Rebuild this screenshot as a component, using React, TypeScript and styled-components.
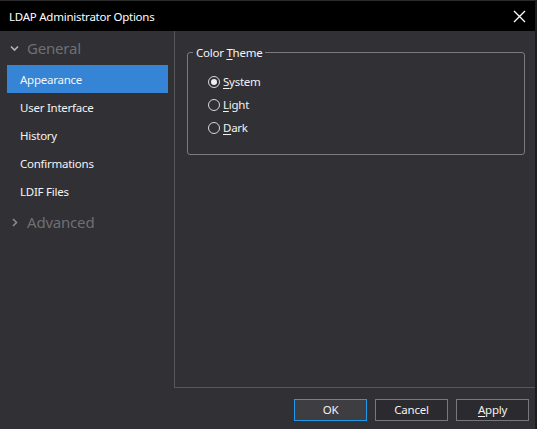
import styled, { createGlobalStyle } from "styled-components"

const GlobalStyle = createGlobalStyle`
	html, body {
		margin: 0;
		padding: 0;
		background: #313035;
	}
	* {
		box-sizing: border-box;
	}
`

const Window = styled.div`
	width: 537px;
	height: 429px;
	display: flex;
	flex-direction: column;
	background: #313035;
	border-right: 2px solid #1d1c20;
	font-family: "Noto Sans", "Segoe UI", sans-serif;
	font-size: 11.5px;
	letter-spacing: -0.25px;
	color: #f2f2f2;
	overflow: hidden;
`

const TitleBar = styled.div`
	height: 31px;
	flex: none;
	background: #000;
	display: flex;
	align-items: center;
	justify-content: space-between;
	padding: 0 9px 0 9px;
	border-top: 1px solid #2a2a2a;
`

const Title = styled.span`
	color: #fff;
`

const CloseButton = styled.button`
	background: none;
	border: none;
	padding: 0;
	width: 14px;
	height: 14px;
	display: flex;
	align-items: center;
	justify-content: center;
	cursor: pointer;
`

const Main = styled.div`
	flex: 1;
	display: flex;
	min-height: 0;
`

const Sidebar = styled.nav`
	width: 174px;
	flex: none;
	padding-top: 3px;
	display: flex;
	flex-direction: column;
`

const GroupHeader = styled.div`
	height: 28px;
	margin: 0 0 3px 0;
	display: flex;
	align-items: center;
	padding-left: 10px;
	gap: 8px;
	font-size: 15px;
	letter-spacing: -0.2px;
	color: #6f6f72;
`

const NavItem = styled.div<{ $active?: boolean }>`
	height: 28px;
	margin: 0 6px 0 7px;
	padding-left: 13px;
	display: flex;
	align-items: center;
	background: ${p => p.$active ? "#3584d5" : "transparent"};
	color: #f4f4f4;
`

const AdvancedHeader = styled(GroupHeader)`
	margin-top: 3px;
`

const Content = styled.section`
	flex: 1;
	border-left: 1px solid #58575c;
	border-bottom: 1px solid #58575c;
	padding: 14px 10px 0 12px;
`

const GroupBox = styled.fieldset`
	margin: 0;
	width: 338px;
	padding: 10px 0 15px 5px;
	border: 1px solid #7b7a7f;
	border-radius: 3px;
`

const Legend = styled.legend`
	margin-left: 0;
	padding: 0 3px;
	color: #f4f4f4;
`

const RadioList = styled.div`
	display: flex;
	flex-direction: column;
	padding-left: 15px;
`

const RadioRow = styled.label`
	height: 23px;
	display: flex;
	align-items: center;
	gap: 3px;
	cursor: pointer;
`

const RadioCircle = styled.span<{ $checked?: boolean }>`
	width: 12px;
	height: 12px;
	border-radius: 50%;
	border: 1px solid #d8d8d8;
	display: flex;
	align-items: center;
	justify-content: center;
	&::after {
		content: "";
		width: 6px;
		height: 6px;
		border-radius: 50%;
		background: ${p => p.$checked ? "#f0f0f0" : "transparent"};
	}
`

const Key = styled.span`
	text-decoration: underline;
	text-underline-offset: 2px;
`

const Footer = styled.div`
	height: 41px;
	flex: none;
	display: flex;
	justify-content: flex-end;
	align-items: center;
	gap: 8px;
	padding-right: 6px;
	padding-top: 2px;
`

const Button = styled.button<{ $primary?: boolean }>`
	width: 73px;
	height: 22px;
	border: 1px solid ${p => p.$primary ? "#1b9bea" : "#78777c"};
	background: ${p => p.$primary ? "#3e3d42" : "#2b2a2f"};
	color: #f2f2f2;
	font-family: inherit;
	font-size: inherit;
	letter-spacing: inherit;
	padding: 0;
	cursor: pointer;
`

function CloseIcon() {
	return (
		<svg width="13" height="13" viewBox="0 0 13 13">
			<path d="M1 1 L12 12 M12 1 L1 12" stroke="#fff" strokeWidth="1.3" fill="none" />
		</svg>
	)
}

function Chevron({ open }: { open?: boolean }) {
	return (
		<svg width="9" height="9" viewBox="0 0 9 9">
			{open
				? <path d="M1 2.5 L4.5 6 L8 2.5" stroke="#b4b4b8" strokeWidth="1.6" fill="none" />
				: <path d="M3 1 L6.5 4.5 L3 8" stroke="#8a8a8e" strokeWidth="1.6" fill="none" />
			}
		</svg>
	)
}

const themes = [
	{ key: "S", rest: "ystem", checked: true },
	{ key: "L", rest: "ight", checked: false },
	{ key: "D", rest: "ark", checked: false },
]

const navItems = ["Appearance", "User Interface", "History", "Confirmations", "LDIF Files"]

export default function App() {
	return (
		<>
			<GlobalStyle />
			<Window>
				<TitleBar>
					<Title>LDAP Administrator Options</Title>
					<CloseButton aria-label="Close">
						<CloseIcon />
					</CloseButton>
				</TitleBar>

				<Main>
					<Sidebar>
						<GroupHeader>
							<Chevron open />
							General
						</GroupHeader>
						{navItems.map((item, i) => (
							<NavItem key={item} $active={i === 0}>{item}</NavItem>
						))}
						<AdvancedHeader>
							<Chevron />
							Advanced
						</AdvancedHeader>
					</Sidebar>

					<Content>
						<GroupBox>
							<Legend>Color <Key>T</Key>heme</Legend>
							<RadioList>
								{themes.map(t => (
									<RadioRow key={t.key}>
										<RadioCircle $checked={t.checked} />
										<span><Key>{t.key}</Key>{t.rest}</span>
									</RadioRow>
								))}
							</RadioList>
						</GroupBox>
					</Content>
				</Main>

				<Footer>
					<Button $primary>OK</Button>
					<Button>Cancel</Button>
					<Button><Key>A</Key>pply</Button>
				</Footer>
			</Window>
		</>
	)
}
